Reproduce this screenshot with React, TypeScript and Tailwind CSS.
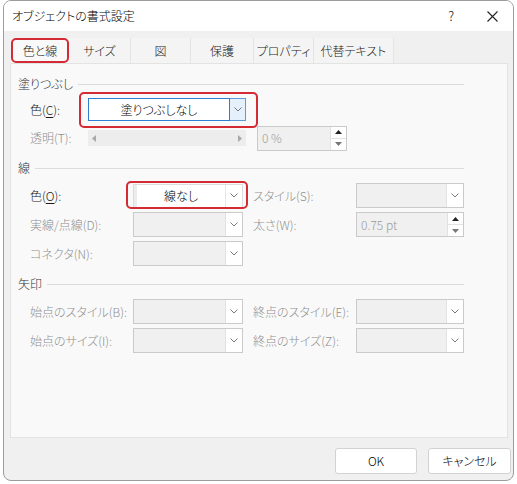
import React from 'react';

const font = "font-['Noto_Sans_CJK_JP','Noto_Sans',sans-serif] font-light [font-feature-settings:'palt']";

const Chevron = () => (
  <svg width="8" height="5" viewBox="0 0 8 5">
    <path d="M0.5 0.5 L4 4 L7.5 0.5" fill="none" stroke="#7a7a7a" strokeWidth="1" />
  </svg>
);

// gray, disabled combo box
const EmptySelect = ({ className }: { className: string }) => (
  <div className={`flex h-[25px] border border-[#cacaca] bg-[#f0f0f0] ${className}`}>
    <div className="flex-1" />
    <div className="flex w-[17px] items-center justify-center border-l border-[#e2e2e2] bg-white">
      <Chevron />
    </div>
  </div>
);

const Spin = ({ value, className }: { value: string; className: string }) => (
  <div className={`flex h-[25px] border border-[#cacaca] bg-[#f0f0f0] ${className}`}>
    <div className="flex flex-1 items-center pl-[4px] text-[12px] text-[#9a9a9a]">{value}</div>
    <div className="flex w-[16px] flex-col border-l border-[#e2e2e2] bg-white">
      <div className="flex flex-1 items-center justify-center border-b border-[#e2e2e2]">
        <svg width="7" height="4" viewBox="0 0 7 4"><path d="M0 4 L3.5 0 L7 4 Z" fill="#222" /></svg>
      </div>
      <div className="flex flex-1 items-center justify-center">
        <svg width="7" height="4" viewBox="0 0 7 4"><path d="M0 0 L3.5 4 L7 0 Z" fill="#777" /></svg>
      </div>
    </div>
  </div>
);

const Section = ({ title, mt }: { title: string; mt: string }) => (
  <div className={`flex h-[18px] items-center ${mt}`}>
    <span className="text-[12px] text-[#333]">{title}</span>
    <div className="ml-[5px] flex-1 border-t border-[#dcdcdc]" />
  </div>
);

const Label = ({ text, className }: { text: string; className: string }) => (
  <span className={`shrink-0 text-[12px] text-[#8f8f8f] ${className}`}>{text}</span>
);

// enabled label with underlined access key
const KeyLabel = ({ pre, k, className }: { pre: string; k: string; className: string }) => (
  <span className={`shrink-0 text-[12px] text-[#1a1a1a] ${className}`}>
    {pre}(<span className="underline underline-offset-2">{k}</span>):
  </span>
);

const RedBox = ({ className }: { className: string }) => (
  <div className={`pointer-events-none absolute rounded-[5px] border-2 border-[#d42a33] ${className}`} />
);

const tabs = ['色と線', 'サイズ', '図', '保護', 'プロパティ', '代替テキスト'];
const tabW = ['w-[58px]', 'w-[62px]', 'w-[60px]', 'w-[63px]', 'w-[60px]', 'w-[80px]'];

export default function App() {
  return (
    <div className={`h-[484px] w-[517px] bg-white pl-[3px] pr-[3px] pb-[3px] ${font}`}>
      <div className="flex h-[481px] w-[511px] flex-col overflow-hidden rounded-lg border border-[#9c9c9c] bg-[#f0f0f0]">
        {/* title bar */}
        <div className="flex h-[30px] shrink-0 items-center bg-white pl-[8px]">
          <span className="text-[12px] text-black">オブジェクトの書式設定</span>
          <span className="ml-auto text-[13px] text-[#222]">?</span>
          <svg className="ml-[33px] mr-[15px]" width="11" height="11" viewBox="0 0 11 11">
            <path d="M0.5 0.5 L10.5 10.5 M10.5 0.5 L0.5 10.5" stroke="#222" strokeWidth="1.1" />
          </svg>
        </div>

        {/* tabs */}
        <div className="flex h-[32px] shrink-0 items-end pl-[7px]">
          {tabs.map((t, i) => (
            <div
              key={t}
              className={`relative flex h-[25px] items-center justify-center text-[12px] text-[#1a1a1a] ${tabW[i]} ${
                i === 0 ? 'bg-[#f9f9f9]' : 'border-r border-[#e4e4e4] bg-[#f4f4f4]'
              }`}
            >
              {t}
              {i === 0 && <RedBox className="inset-0" />}
            </div>
          ))}
        </div>

        {/* content panel */}
        <div className="ml-[6px] mr-[5px] flex h-[375px] shrink-0 flex-col border border-[#e3e3e3] bg-[#f9f9f9] pl-[7px] pr-[43px] pt-[11px]">
          <Section title="塗りつぶし" mt="" />
          <div className="mt-[5px] flex h-[23px] items-center">
            <KeyLabel pre="色" k="C" className="ml-[12px] w-[58px]" />
            <div className="relative flex h-[23px] w-[158px]">
              <div className="flex flex-1 items-center justify-center border border-[#2f7fd0] bg-white text-[12px] text-black">
                塗りつぶしなし
              </div>
              <div className="flex w-[16px] items-center justify-center border border-l-0 border-[#5b9bd8] bg-[#e4f0fb]">
                <Chevron />
              </div>
              <RedBox className="-left-[9px] -right-[12px] -top-[6px] -bottom-[7px]" />
            </div>
          </div>
          <div className="mt-[5px] flex h-[24px] items-center">
            <Label text="透明(T):" className="ml-[12px] w-[58px]" />
            <div className="flex h-[16px] w-[158px] items-center justify-between bg-[#ededed] px-[4px]">
              <svg width="4" height="7" viewBox="0 0 4 7"><path d="M4 0 L0 3.5 L4 7 Z" fill="#a8a8a8" /></svg>
              <svg width="4" height="7" viewBox="0 0 4 7"><path d="M0 0 L4 3.5 L0 7 Z" fill="#a8a8a8" /></svg>
            </div>
            <Spin value="0 %" className="ml-[11px] h-[24px] w-[90px]" />
          </div>

          <Section title="線" mt="mt-[9px]" />
          <div className="mt-[6px] flex h-[25px] items-center">
            <KeyLabel pre="色" k="O" className="ml-[12px] w-[103px]" />
            <div className="relative flex h-[24px] w-[110px] border border-[#dcdcdc] bg-white">
              <div className="w-[3px] bg-[#ececec]" />
              <div className="flex flex-1 items-center justify-center text-[12px] text-black">線なし</div>
              <div className="flex w-[17px] items-center justify-center border-l border-[#e6e6e6]">
                <Chevron />
              </div>
              <RedBox className="-left-[8px] -right-[6px] -top-[4px] -bottom-[2px]" />
            </div>
            <Label text="スタイル(S):" className="ml-[10px] w-[103px]" />
            <EmptySelect className="w-[108px]" />
          </div>
          <div className="mt-[4px] flex h-[25px] items-center">
            <Label text="実線/点線(D):" className="ml-[12px] w-[103px]" />
            <EmptySelect className="w-[110px]" />
            <Label text="太さ(W):" className="ml-[10px] w-[103px]" />
            <Spin value="0.75 pt" className="w-[108px]" />
          </div>
          <div className="mt-[4px] flex h-[25px] items-center">
            <Label text="コネクタ(N):" className="ml-[12px] w-[103px]" />
            <EmptySelect className="w-[110px]" />
          </div>

          <Section title="矢印" mt="mt-[9px]" />
          <div className="mt-[6px] flex h-[25px] items-center">
            <Label text="始点のスタイル(B):" className="ml-[12px] w-[103px]" />
            <EmptySelect className="w-[110px]" />
            <Label text="終点のスタイル(E):" className="ml-[10px] w-[103px]" />
            <EmptySelect className="w-[108px]" />
          </div>
          <div className="mt-[4px] flex h-[25px] items-center">
            <Label text="始点のサイズ(I):" className="ml-[12px] w-[103px]" />
            <EmptySelect className="w-[110px]" />
            <Label text="終点のサイズ(Z):" className="ml-[10px] w-[103px]" />
            <EmptySelect className="w-[108px]" />
          </div>
        </div>

        {/* buttons */}
        <div className="flex flex-1 items-start justify-end pr-[2px] pt-[10px]">
          <button className="flex h-[26px] w-[82px] items-center justify-center rounded-[3px] border border-[#d2d2d2] bg-white text-[12px] text-black">
            OK
          </button>
          <button className="ml-[11px] flex h-[26px] w-[83px] items-center justify-center rounded-[3px] border border-[#d2d2d2] bg-white text-[12px] text-black">
            キャンセル
          </button>
        </div>
      </div>
    </div>
  );
}
